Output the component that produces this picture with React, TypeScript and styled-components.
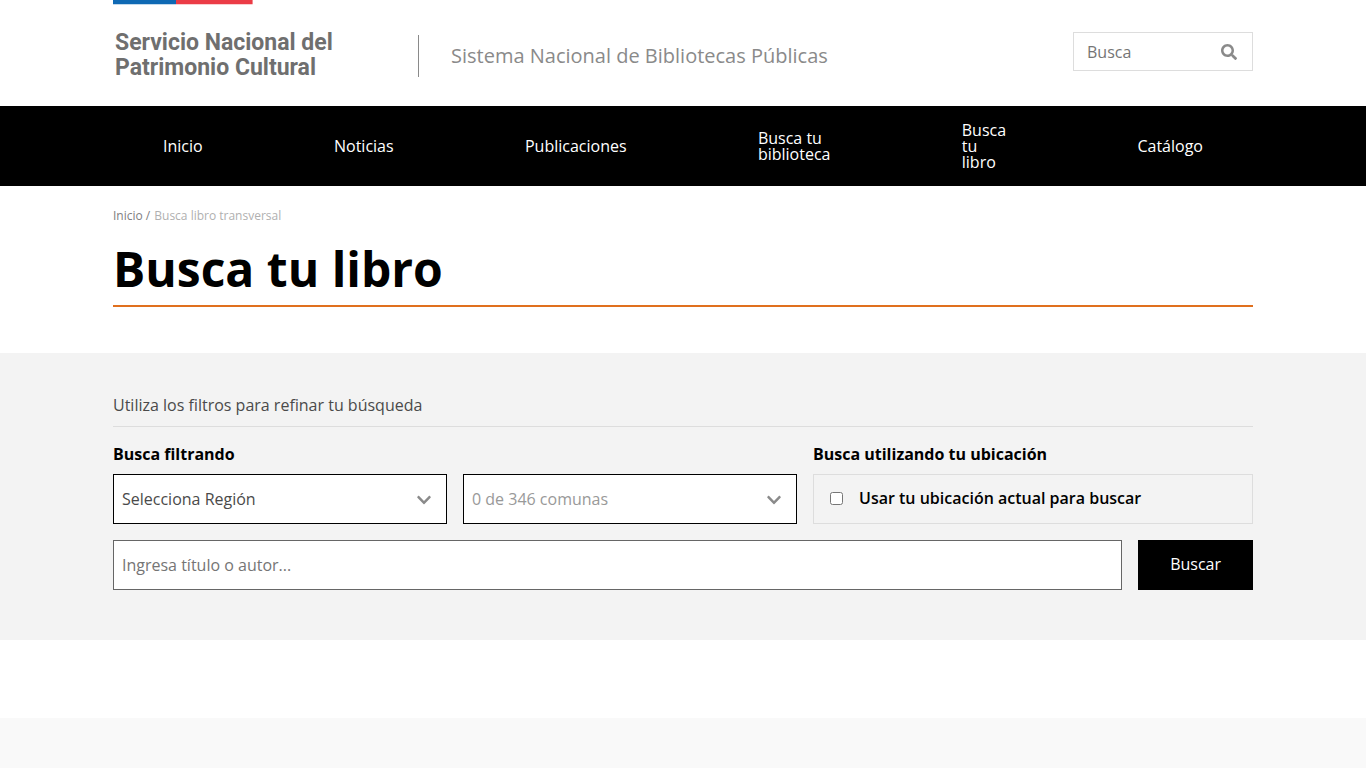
import React from "react";
import styled, { createGlobalStyle } from "styled-components";
import { FaChevronDown, FaSearch } from "react-icons/fa";

const GlobalStyle = createGlobalStyle`
  *, *::before, *::after { box-sizing: border-box; }
  body {
    margin: 0;
    background: #fff;
    color: #000;
    font: 400 16px/24px "Open Sans", sans-serif;
  }
  input, select, button { font: inherit; border-radius: 0; }
`;

const Container = styled.div`
  width: 100%;
  max-width: 1140px;
  margin: 0 auto;
`;

const HeaderRow = styled(Container)`
  display: flex;
  align-items: flex-start;
  min-height: 106px;
`;

const Logo = styled.a`
  flex: 0 0 305px;
  color: #6f6f6f;
  text-decoration: none;
`;

const Flag = styled.svg`
  display: block;
  width: 140px;
  height: 5px;
`;

const LogoText = styled.span`
  display: block;
  margin-top: 25px;
  padding-left: 2px;
  font: 700 23px/25px Roboto, sans-serif;
`;

const SiteName = styled.a`
  margin-top: 35px;
  padding-left: 32px;
  border-left: 1px solid #8a8a8a;
  color: #8a8a8a;
  font-size: 20px;
  line-height: 42px;
  text-decoration: none;
`;

const SiteSearch = styled.form`
  display: flex;
  align-items: center;
  width: 180px;
  height: 39px;
  margin: 32px 0 0 auto;
  padding: 0 15px 0 13px;
  border: 1px solid #ddd;
`;

const SiteSearchInput = styled.input`
  flex: 1;
  min-width: 0;
  padding: 0;
  border: 0;
  background: none;
  outline: 0;
  &::placeholder { color: #757575; opacity: 1; }
`;

const IconButton = styled.button`
  display: flex;
  padding: 0;
  border: 0;
  background: none;
  color: #8a8a8a;
`;

const Nav = styled.nav`
  background: #000;
`;

const NavList = styled.ul`
  display: flex;
  align-items: center;
  justify-content: space-between;
  max-width: 1140px;
  min-height: 80px;
  margin: 0 auto;
  padding: 0 50px;
  list-style: none;
`;

const NavItem = styled.li`
  width: min-content;
  line-height: 16px;
`;

const NavLink = styled.a`
  color: #fff;
  font-weight: 500;
  text-decoration: none;
`;

const Breadcrumb = styled.nav`
  display: flex;
  gap: 4px;
  padding-top: 20px;
  color: #b0b0b0;
  font-size: 12px;
  line-height: 20px;
`;

const Crumb = styled.a`
  color: #808080;
  text-decoration: none;
`;

const Title = styled.h1`
  margin: 10px 0 46px;
  padding-bottom: 4px;
  border-bottom: 2px solid #e0701e;
  font-size: 48px;
  font-weight: 700;
  line-height: 65px;
`;

const FilterSection = styled.section`
  padding: 40px 0 50px;
  background: #f3f3f3;
`;

const Intro = styled.p`
  margin: 0 0 15px;
  padding-bottom: 9px;
  border-bottom: 1px solid #ddd;
  color: #4a4a4a;
`;

const FilterForm = styled.form`
  display: grid;
  gap: 16px;
`;

const FilterGrid = styled.div`
  display: grid;
  grid-template-columns: 700fr 440fr;
`;

const FilterGroup = styled.fieldset`
  min-width: 0;
  margin: 0;
  padding: 0;
  border: 0;
`;

const GroupTitle = styled.legend`
  padding: 0 0 8px;
  font-weight: 700;
`;

const SelectRow = styled.div`
  display: grid;
  grid-template-columns: 1fr 1fr;
  gap: 16px;
  padding-right: 16px;
`;

const SelectBox = styled.div`
  display: grid;
  align-items: center;
  & > * { grid-area: 1 / 1; }
  & > svg {
    justify-self: end;
    margin: 2px 15px 0 0;
    color: #8a8a8a;
    pointer-events: none;
  }
`;

const Select = styled.select<{ $muted?: boolean }>`
  width: 100%;
  height: 50px;
  padding: 0 40px 0 8px;
  border: 1px solid #000;
  background: #fff;
  color: ${(p) => (p.$muted ? "#999" : "#4a4a4a")};
  appearance: none;
`;

const LocationOption = styled.label`
  display: flex;
  align-items: center;
  gap: 16px;
  height: 50px;
  padding: 0 16px 2px;
  border: 1px solid #ddd;
  font-weight: 600;
`;

const Checkbox = styled.input`
  width: 13px;
  height: 13px;
  margin: 0;
`;

const SearchRow = styled.div`
  display: flex;
  gap: 16px;
`;

const TextInput = styled.input`
  flex: 1;
  min-width: 0;
  height: 50px;
  padding: 0 8px;
  border: 1px solid #666;
  background: #fff;
  &::placeholder { color: #757575; opacity: 1; }
`;

const SubmitButton = styled.button`
  height: 50px;
  padding: 0 32px 2px;
  border: 0;
  background: #000;
  color: #fff;
  font-weight: 500;
`;

const Footer = styled.footer`
  min-height: 50px;
  margin-top: 78px;
  background: #f9f9f9;
`;

const navItems = [
  "Inicio",
  "Noticias",
  "Publicaciones",
  "Busca tu biblioteca",
  "Busca tu libro",
  "Catálogo",
];

export default function App() {
  return (
    <>
      <GlobalStyle />
      <header>
        <HeaderRow>
          <Logo href="#">
            <Flag viewBox="0 0 140 5" aria-hidden="true">
              <path fill="#0f69b4" d="M0 0h63v4.3H0z" />
              <path fill="#eb3c46" d="M63 0h76.600v4.300H63z" />
            </Flag>
            <LogoText>
              Servicio Nacional del
              <br />
              Patrimonio Cultural
            </LogoText>
          </Logo>
          <SiteName href="#">Sistema Nacional de Bibliotecas Públicas</SiteName>
          <SiteSearch role="search">
            <SiteSearchInput type="text" placeholder="Busca" aria-label="Busca" />
            <IconButton type="submit" aria-label="Buscar en el sitio">
              <FaSearch size={16} />
            </IconButton>
          </SiteSearch>
        </HeaderRow>
        <Nav>
          <NavList>
            {navItems.map((item) => (
              <NavItem key={item}>
                <NavLink href="#">{item}</NavLink>
              </NavItem>
            ))}
          </NavList>
        </Nav>
      </header>
      <main>
        <Container>
          <Breadcrumb aria-label="Ruta">
            <Crumb href="#">Inicio /</Crumb>
            <span>Busca libro transversal</span>
          </Breadcrumb>
          <Title>Busca tu libro</Title>
        </Container>
        <FilterSection>
          <Container>
            <Intro>Utiliza los filtros para refinar tu búsqueda</Intro>
            <FilterForm>
              <FilterGrid>
                <FilterGroup>
                  <GroupTitle>Busca filtrando</GroupTitle>
                  <SelectRow>
                    <SelectBox>
                      <Select aria-label="Región">
                        <option>Selecciona Región</option>
                      </Select>
                      <FaChevronDown size={16} />
                    </SelectBox>
                    <SelectBox>
                      <Select $muted aria-label="Comuna">
                        <option>0 de 346 comunas</option>
                      </Select>
                      <FaChevronDown size={16} />
                    </SelectBox>
                  </SelectRow>
                </FilterGroup>
                <FilterGroup>
                  <GroupTitle>Busca utilizando tu ubicación</GroupTitle>
                  <LocationOption>
                    <Checkbox type="checkbox" />
                    Usar tu ubicación actual para buscar
                  </LocationOption>
                </FilterGroup>
              </FilterGrid>
              <SearchRow>
                <TextInput
                  type="text"
                  placeholder="Ingresa título o autor..."
                  aria-label="Título o autor"
                />
                <SubmitButton type="submit">Buscar</SubmitButton>
              </SearchRow>
            </FilterForm>
          </Container>
        </FilterSection>
      </main>
      <Footer />
    </>
  );
}
